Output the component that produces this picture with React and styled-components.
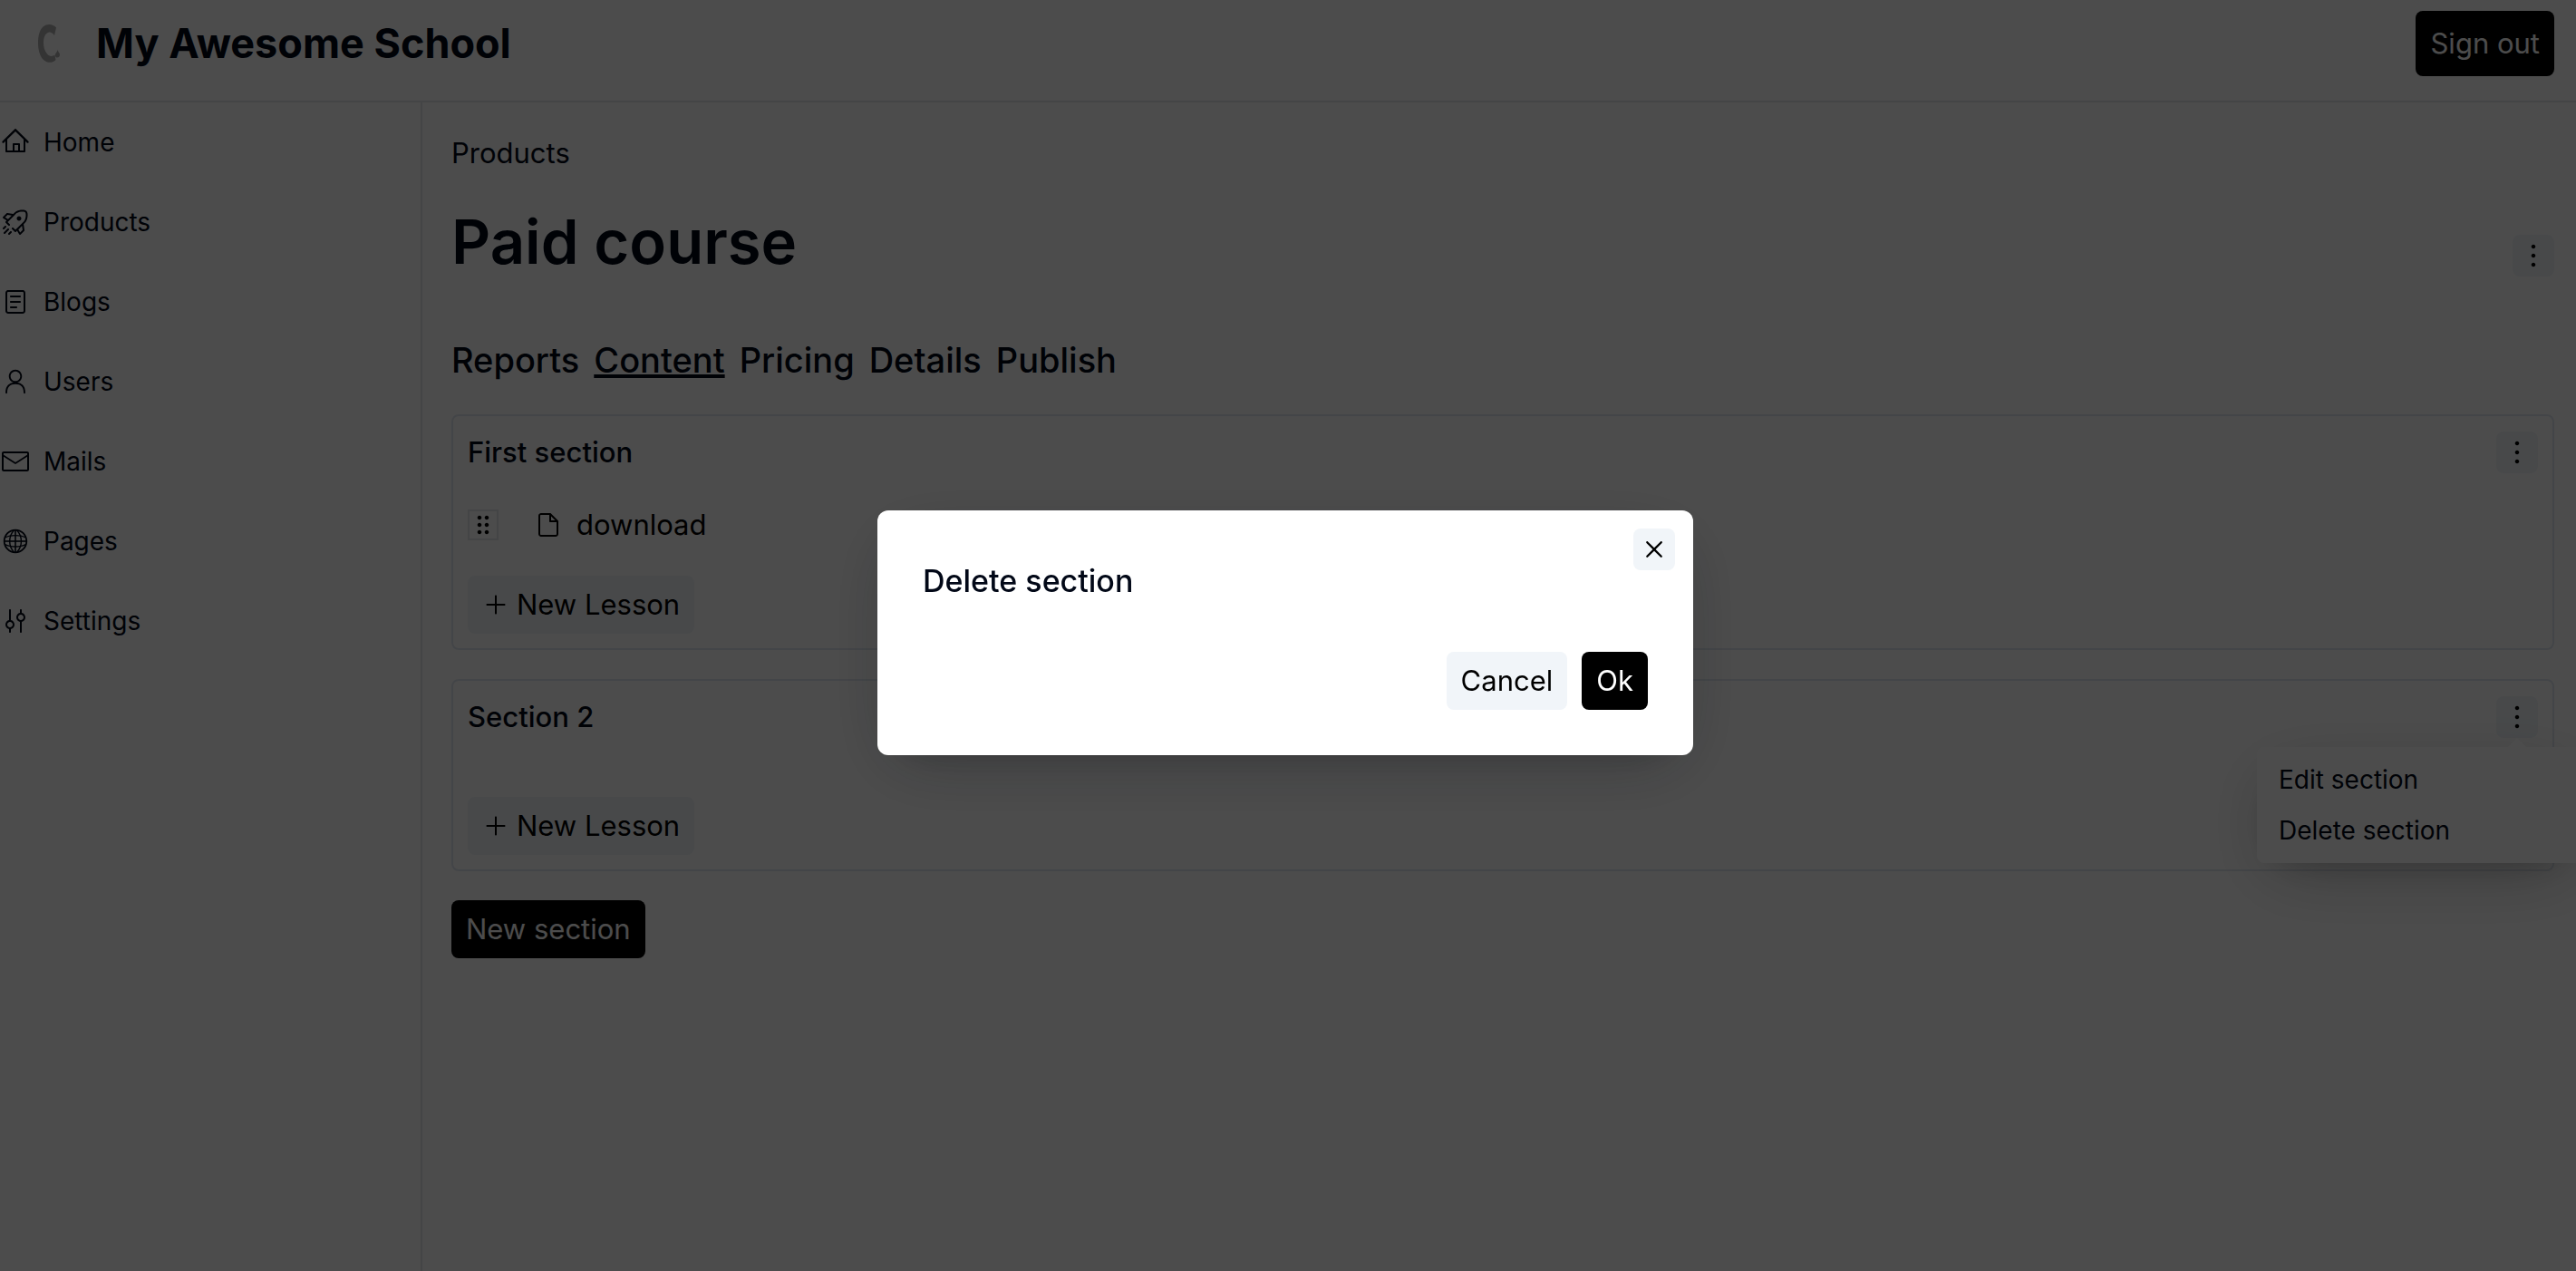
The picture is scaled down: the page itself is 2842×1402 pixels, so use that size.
import React from "react";
import styled, { createGlobalStyle, css } from "styled-components";
import {
  RxCross2,
  RxDotsVertical,
  RxDragHandleDots2,
  RxEnvelopeClosed,
  RxFile,
  RxGlobe,
  RxHome,
  RxMixerVertical,
  RxPerson,
  RxPlus,
  RxReader,
  RxRocket,
} from "react-icons/rx";

const GlobalStyle = createGlobalStyle`
  *, *::before, *::after { box-sizing: border-box; }
  body {
    margin: 0;
    background: #fff;
    color: #020817;
    font-family: Inter, "Liberation Sans", sans-serif;
    font-size: 31px;
    line-height: 48px;
  }
  h1, h2, h3, p, ul { margin: 0; padding: 0; }
  ul { list-style: none; }
  a { color: inherit; text-decoration: none; }
  button { font: inherit; border: 0; margin: 0; cursor: pointer; }
  svg { flex: none; }
`;

const Page = styled.div`
  display: flex;
  flex-direction: column;
  min-height: 100vh;
  overflow: hidden;
`;

const Header = styled.header`
  display: flex;
  align-items: center;
  justify-content: space-between;
  padding: 12px 24px 27px;
  border-bottom: 2px solid #e5e7eb;
`;

const Brand = styled.a`
  display: flex;
  align-items: center;
  gap: 28px;
  padding-left: 8px;
  font-size: 45px;
  font-weight: 700;
`;

const Body = styled.div`
  display: flex;
  flex: 1;
`;

const Sidebar = styled.nav`
  flex: none;
  width: 466px;
  border-right: 2px solid #e5e7eb;
`;

const NavLink = styled.a`
  display: flex;
  align-items: center;
  gap: 16px;
  height: 88px;
  padding-left: 2px;
  font-size: 28px;
`;

const Main = styled.main`
  display: flex;
  flex: 1;
  flex-direction: column;
  gap: 32px;
  min-width: 0;
  padding: 32px 24px 32px 32px;
`;

const TitleRow = styled.div`
  display: flex;
  align-items: flex-end;
  justify-content: space-between;
  margin-bottom: 32px;
`;

const Title = styled.h1`
  padding-top: 4px;
  font-size: 67px;
  font-weight: 600;
  line-height: 76px;
`;

const Tabs = styled.nav`
  display: flex;
  gap: 16px;
  font-size: 38px;
  font-weight: 500;
  line-height: 56px;
`;

const Tab = styled.a`
  text-decoration: ${(p) => (p.$active ? "underline" : "none")};
  text-decoration-thickness: 4px;
  text-decoration-skip-ink: none;
`;

const Button = styled.button`
  display: inline-flex;
  align-items: center;
  gap: 8px;
  align-self: flex-start;
  height: ${(p) => (p.$tall ? "72px" : "64px")};
  padding: 0 16px;
  border-radius: 8px;
  white-space: nowrap;
  ${(p) =>
    p.$secondary
      ? css`
          background: #f1f5f9;
          color: #000;
        `
      : css`
          background: #000;
          color: #fff;
        `}
`;

const IconButton = styled.button`
  display: flex;
  padding: 8px;
  border-radius: 8px;
  background: #f1f5f9;
  color: #000;
`;

const Card = styled.section`
  display: flex;
  flex-direction: column;
  gap: 32px;
  padding: 16px;
  border: 2px solid #e2e8f0;
  border-radius: 8px;
`;

const CardHeader = styled.div`
  display: flex;
  align-items: center;
  justify-content: space-between;
`;

const CardTitle = styled.h2`
  font-size: 31px;
  font-weight: 500;
`;

const Lesson = styled.li`
  display: flex;
  align-items: center;
  gap: 40px;
  color: #000;
`;

const DragHandle = styled.button`
  display: flex;
  padding: 0;
  border: 2px solid #e5e7eb;
  background: transparent;
  color: #000;
`;

const LessonLink = styled.a`
  display: flex;
  align-items: center;
  gap: 16px;
`;

const MenuAnchor = styled.div`
  position: relative;
`;

const Menu = styled.div`
  position: absolute;
  top: calc(100% + 10px);
  right: -50px;
  width: 360px;
  padding: 8px;
  border-radius: 8px;
  background: #fff;
  box-shadow: 0 20px 76px -20px rgba(22, 23, 24, 0.35),
    0 20px 40px -30px rgba(22, 23, 24, 0.2);
`;

const MenuArrow = styled.span`
  position: absolute;
  bottom: 100%;
  right: 63px;
  border: 10px solid transparent;
  border-top: 0;
  border-bottom-color: #fff;
`;

const MenuItem = styled.button`
  display: block;
  width: 100%;
  padding: 8px 16px;
  background: transparent;
  color: #020817;
  font-size: 28px;
  line-height: 40px;
  text-align: left;
`;

const Overlay = styled.div`
  position: fixed;
  inset: 0;
  display: grid;
  place-items: center;
  padding: 0 6px 6px 0;
  background: rgba(0, 0, 0, 0.7);
`;

const Dialog = styled.div`
  position: relative;
  display: flex;
  flex-direction: column;
  gap: 50px;
  width: 900px;
  max-width: 90vw;
  padding: 50px;
  border-radius: 12px;
  background: #fff;
  box-shadow: 0 20px 76px -20px rgba(14, 18, 22, 0.35),
    0 20px 40px -30px rgba(14, 18, 22, 0.2);
`;

const DialogTitle = styled.h2`
  font-size: 34px;
  font-weight: 500;
  line-height: 56px;
`;

const DialogActions = styled.div`
  display: flex;
  justify-content: flex-end;
  gap: 16px;
`;

const DialogClose = styled(IconButton)`
  position: absolute;
  top: 20px;
  right: 20px;
`;

const ICON = 30;

const navItems = [
  ["Home", RxHome],
  ["Products", RxRocket],
  ["Blogs", RxReader],
  ["Users", RxPerson],
  ["Mails", RxEnvelopeClosed],
  ["Pages", RxGlobe],
  ["Settings", RxMixerVertical],
];

const tabs = ["Reports", "Content", "Pricing", "Details", "Publish"];

const sections = [
  { name: "First section", lessons: ["download"] },
  { name: "Section 2", lessons: [], menuOpen: true },
];

function Logo() {
  return (
    <svg width="46" height="48" viewBox="0 0 46 48" aria-hidden="true">
      <path
        d="M30 6.500C27 2.500 20 1.500 15.500 5.500C11.500 9 10 16 10 23.500C10 31 12 38.500 16 42C20.500 46 26.500 45.500 29.500 42L28.500 36.500C25.500 39 22 38 20 35.500C17 32 16 28 16 23C16 18 17 14.500 20 12.500C22.500 10.500 26 12 28 15Z"
        fill="#adadad"
      />
      <path
        d="M31.500 30.500C31.500 33 34 34 34 36.500C34 38.500 32.500 39.500 31 39.500C29.500 39.500 28.500 38 29 36C29.500 34 31.500 33 31.500 30.500Z"
        fill="#adadad"
      />
    </svg>
  );
}

function Section({ name, lessons, menuOpen }) {
  return (
    <Card>
      <CardHeader>
        <CardTitle>{name}</CardTitle>
        <MenuAnchor>
          <IconButton aria-label={`${name} options`}>
            <RxDotsVertical size={ICON} />
          </IconButton>
          {menuOpen && (
            <Menu role="menu">
              <MenuArrow />
              <MenuItem role="menuitem">Edit section</MenuItem>
              <MenuItem role="menuitem">Delete section</MenuItem>
            </Menu>
          )}
        </MenuAnchor>
      </CardHeader>
      <ul>
        {lessons.map((lesson) => (
          <Lesson key={lesson}>
            <DragHandle aria-label="Reorder lesson">
              <RxDragHandleDots2 size={ICON} />
            </DragHandle>
            <LessonLink href="#lesson">
              <RxFile size={ICON} />
              {lesson}
            </LessonLink>
          </Lesson>
        ))}
      </ul>
      <Button $secondary>
        <RxPlus size={ICON} />
        New Lesson
      </Button>
    </Card>
  );
}

export default function App() {
  return (
    <>
      <GlobalStyle />
      <Page>
        <Header>
          <Brand href="#school">
            <Logo />
            My Awesome School
          </Brand>
          <Button $tall>Sign out</Button>
        </Header>
        <Body>
          <Sidebar>
            {navItems.map(([label, Icon]) => (
              <NavLink key={label} href={`#${label.toLowerCase()}`}>
                <Icon size={ICON} />
                {label}
              </NavLink>
            ))}
          </Sidebar>
          <Main>
            <a href="#products">Products</a>
            <TitleRow>
              <Title>Paid course</Title>
              <IconButton aria-label="Course options">
                <RxDotsVertical size={ICON} />
              </IconButton>
            </TitleRow>
            <Tabs>
              {tabs.map((tab) => (
                <Tab
                  key={tab}
                  href={`#${tab.toLowerCase()}`}
                  $active={tab === "Content"}
                >
                  {tab}
                </Tab>
              ))}
            </Tabs>
            {sections.map((section) => (
              <Section key={section.name} {...section} />
            ))}
            <Button>New section</Button>
          </Main>
        </Body>
      </Page>
      <Overlay>
        <Dialog role="dialog" aria-modal="true" aria-labelledby="dialog-title">
          <DialogTitle id="dialog-title">Delete section</DialogTitle>
          <DialogActions>
            <Button $secondary>Cancel</Button>
            <Button>Ok</Button>
          </DialogActions>
          <DialogClose aria-label="Close">
            <RxCross2 size={ICON} />
          </DialogClose>
        </Dialog>
      </Overlay>
    </>
  );
}
